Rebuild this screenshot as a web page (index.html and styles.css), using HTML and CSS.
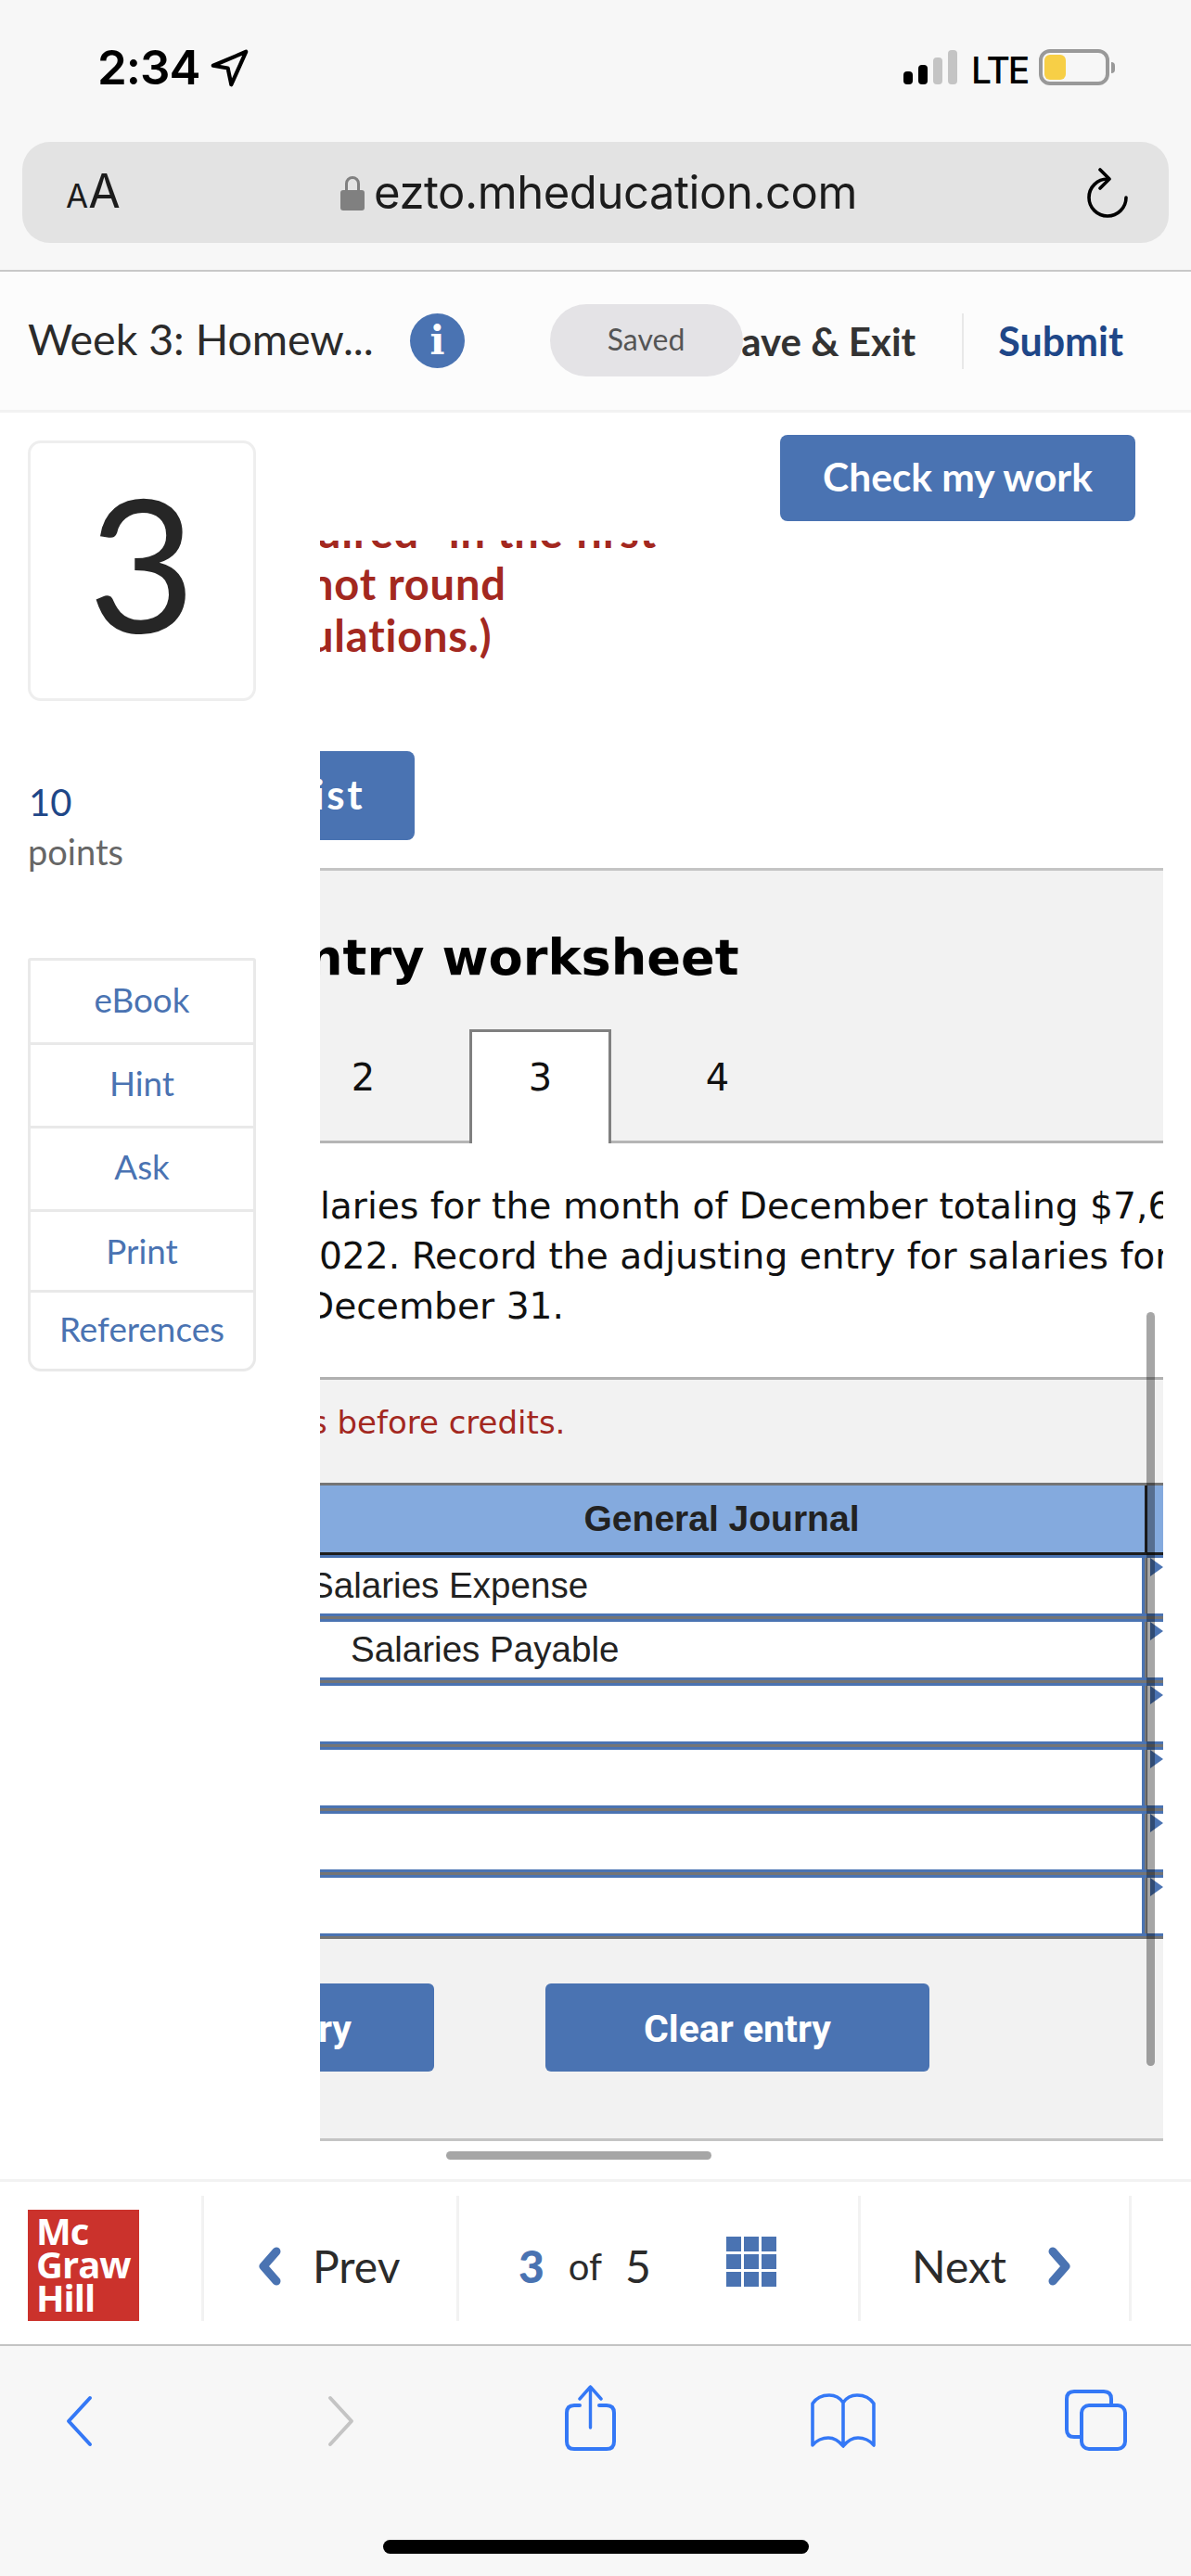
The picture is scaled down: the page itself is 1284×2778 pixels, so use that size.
FILE: index.html
```html
<!DOCTYPE html>
<html lang="en">
<head>
<meta charset="utf-8">
<title>Week 3: Homework</title>
<link rel="stylesheet" href="styles.css">
</head>
<body>
<div class="phone">
  <div class="chrome">
    <div class="status">
      <span class="time">2:34</span>
      <svg class="loc" viewBox="0 0 44 44"><path d="M3 19 L41 3 L24 41 L20 22 Z" fill="none" stroke="#000" stroke-width="4.5" stroke-linejoin="round"/></svg>
      <div class="status-right">
        <div class="signal">
          <i class="bar b1"></i><i class="bar b2"></i><i class="bar b3"></i><i class="bar b4"></i>
        </div>
        <span class="lte">LTE</span>
        <div class="battery"><i class="battery-fill"></i></div>
        <i class="battery-nub"></i>
      </div>
    </div>
    <div class="urlbar">
      <span class="aa"><small>A</small>A</span>
      <div class="url">
        <svg class="lock" viewBox="0 0 26 38"><path d="M6.5 18 V9 A6.5 6.5 0 0 1 19.5 9 V18" fill="none" stroke="#808080" stroke-width="3"/><rect x="0" y="16" width="26" height="22" rx="3" fill="#808080"/></svg>
        <span class="url-text">ezto.mheducation.com</span>
      </div>
      <svg class="reload" viewBox="0 0 44 54"><path d="M22 12 A20 20 0 1 0 42 32" fill="none" stroke="#000" stroke-width="3.6" stroke-linecap="round"/><path d="M14 2 L24 12 L14 22" fill="none" stroke="#000" stroke-width="3.6" stroke-linecap="round" stroke-linejoin="round"/></svg>
    </div>
  </div>

  <header class="topbar">
    <span class="title">Week 3: Homew...</span>
    <span class="info">i</span>
    <div class="actions">
      <span class="save">Save &amp; Exit</span>
      <span class="pill">Saved</span>
      <span class="submit">Submit</span>
    </div>
  </header>

  <main class="main">
    <aside class="side">
      <div class="qnum">3</div>
      <div class="pts">10</div>
      <div class="pts-label">points</div>
      <nav class="menu">
        <a class="m1">eBook</a>
        <a class="m2">Hint</a>
        <a class="m3">Ask</a>
        <a class="m4">Print</a>
        <a class="m5">References</a>
      </nav>
    </aside>

    <section class="content">
      <div class="checkrow"><button class="check">Check my work</button></div>
      <div class="scroller">
        <div class="redtext">
          <div class="r1">uired" in the first</div>
          <div class="r2">not round</div>
          <div class="r3">calculations.)</div>
        </div>
        <button class="viewlist">View transaction list</button>
        <div class="ws-head">
          <h1 class="ws-title">Journal entry worksheet</h1>
          <div class="tabs">
            <span class="tab">1</span>
            <span class="tab">2</span>
            <span class="tab active">3</span>
            <span class="tab">4</span>
          </div>
        </div>
        <div class="desc">
          <div class="d1">Salaries for the month of December totaling $7,600</div>
          <div class="d2">2022. Record the adjusting entry for salaries for</div>
          <div class="d3">December 31.</div>
        </div>
        <div class="entry">
          <p class="note">Enter debits before credits.</p>
          <div class="journal">
            <div class="jhead"><div class="jtitle">General Journal</div><div class="jside"></div></div>
            <div class="jrow"><div class="jcell"><span class="acct debit">Salaries Expense</span></div><div class="jmark"><i class="tri"></i></div></div>
            <div class="jrow"><div class="jcell"><span class="acct credit">Salaries Payable</span></div><div class="jmark"><i class="tri"></i></div></div>
            <div class="jrow"><div class="jcell"></div><div class="jmark"><i class="tri"></i></div></div>
            <div class="jrow"><div class="jcell"></div><div class="jmark"><i class="tri"></i></div></div>
            <div class="jrow"><div class="jcell"></div><div class="jmark"><i class="tri"></i></div></div>
            <div class="jrow"><div class="jcell"></div><div class="jmark"><i class="tri"></i></div></div>
          </div>
          <div class="entry-btns">
            <button class="ebtn">Record entry</button>
            <button class="ebtn">Clear entry</button>
          </div>
        </div>
      </div>
      <i class="vscroll"></i>
      <i class="hscroll"></i>
    </section>
  </main>

  <footer class="pager">
    <div class="logo-cell"><div class="logo"><span>Mc</span><span>Graw</span><span>Hill</span></div></div>
    <div class="pcell prev">
      <svg class="chev" viewBox="0 0 27 42"><path d="M21 5 L7 21 L21 37" fill="none" stroke="#4a73b2" stroke-width="9" stroke-linecap="round" stroke-linejoin="round"/></svg>
      <span>Prev</span>
    </div>
    <div class="pcell pages">
      <b class="cur">3</b><span class="of">of</span><span class="tot">5</span>
      <div class="grid"><i></i><i></i><i></i><i></i><i></i><i></i><i></i><i></i><i></i></div>
    </div>
    <div class="pcell next">
      <span>Next</span>
      <svg class="chev" viewBox="0 0 27 42"><path d="M6 5 L20 21 L6 37" fill="none" stroke="#4a73b2" stroke-width="9" stroke-linecap="round" stroke-linejoin="round"/></svg>
    </div>
    <div class="pend"></div>
  </footer>

  <div class="toolbar">
    <div class="tools">
      <svg class="t-back" viewBox="0 0 30 56"><path d="M26 3 L3 28 L26 53" fill="none" stroke="#3478f6" stroke-width="4" stroke-linecap="round" stroke-linejoin="round"/></svg>
      <svg class="t-fwd" viewBox="0 0 30 56"><path d="M4 3 L27 28 L4 53" fill="none" stroke="#c4c4c4" stroke-width="4" stroke-linecap="round" stroke-linejoin="round"/></svg>
      <svg class="t-share" viewBox="0 0 55 71"><path d="M16 22 H10 Q2 22 2 30 V61 Q2 69 10 69 H45 Q53 69 53 61 V30 Q53 22 45 22 H37" fill="none" stroke="#3478f6" stroke-width="4" stroke-linecap="round"/><path d="M27.5 46 V2 M16 15 L27.5 2 L39 15" fill="none" stroke="#3478f6" stroke-width="3.4" stroke-linecap="round" stroke-linejoin="round"/></svg>
      <svg class="t-book" viewBox="0 0 70 59"><path d="M35 10 C31 4 25 2 20 2 C13 2 6 5 2 11 L2 56 C6 51 13 48 19 48 C26 48 31 52 35 57 C39 52 44 48 51 48 C57 48 64 51 68 56 L68 11 C64 5 57 2 50 2 C45 2 39 4 35 10 Z M35 10 V57" fill="none" stroke="#3478f6" stroke-width="3.6" stroke-linejoin="round"/></svg>
      <svg class="t-tabs" viewBox="0 0 67 66"><path d="M50 15 V10 Q50 2 42 2 H10 Q2 2 2 10 V43 Q2 51 10 51 H16" fill="none" stroke="#3478f6" stroke-width="4"/><rect x="18" y="17" width="47" height="47" rx="8" fill="none" stroke="#3478f6" stroke-width="4"/></svg>
    </div>
    <i class="homebar"></i>
  </div>
</div>
</body>
</html>
```
FILE: styles.css
```css
* { box-sizing: border-box; }
html, body { margin: 0; padding: 0; background: #fff; }
.phone { width: 1284px; height: 2778px; display: flex; flex-direction: column; overflow: hidden; font-family: Lato, sans-serif; color: #2b2b2b; }
button { border: 0; cursor: pointer; }
i { display: block; font-style: normal; }

/* top browser chrome */
.chrome { height: 291px; flex: none; background: #f7f7f7; }
.status { height: 153px; display: flex; align-items: flex-start; padding: 42px 0 0 105px; }
.time { font: 600 51px/62px Inter, sans-serif; color: #000; letter-spacing: -1px; }
.loc { width: 41px; height: 41px; margin: 11px 0 0 12px; }
.status-right { margin-left: auto; display: flex; align-items: flex-start; padding: 12px 82px 0 0; }
.signal { display: flex; align-items: flex-end; gap: 6px; height: 37px; width: 58px; }
.bar { width: 10px; border-radius: 4px; }
.b1 { height: 14px; background: #000; }
.b2 { height: 21px; background: #000; }
.b3 { height: 29px; background: #c4c4c4; }
.b4 { height: 37px; background: #c4c4c4; }
.lte { font: 500 39px/44px Inter, sans-serif; color: #000; margin-left: 15px; width: 73px; letter-spacing: -2px; }
.battery { width: 76px; height: 39px; margin-top: -1px; border: 4px solid #999; border-radius: 12px; padding: 2px; }
.battery-fill { width: 23px; height: 27px; background: #f7cf46; border-radius: 6px; }
.battery-nub { width: 4px; height: 12px; margin: 13px 0 0 2px; background: #999; border-radius: 0 6px 6px 0; }

.urlbar { height: 109px; margin: 0 24px; background: #e3e3e3; border-radius: 30px; display: flex; align-items: center; padding: 0 44px 0 47px; position: relative; }
.aa { font: 400 50px/60px Inter, sans-serif; color: #1c1c1c; width: 57px; padding-top: 2px; }
.aa small { font-size: 35px; }
.url { margin-left: 239px; display: flex; align-items: center; gap: 10px; }
.lock { width: 26px; height: 38px; }
.url-text { font: 400 49px/60px Inter, sans-serif; color: #1c1c1c; letter-spacing: -0.45px; width: 530px; white-space: nowrap; }
.reload { width: 44px; height: 54px; margin-left: auto; }

/* assignment header */
.topbar { height: 154px; flex: none; background: #fcfcfc; border-top: 2px solid #c8c8c8; border-bottom: 3px solid #f2f2f2; display: flex; align-items: center; padding-left: 30px; }
.title { font-size: 46.5px; line-height: 50px; padding-bottom: 6px; color: #2b2b2b; width: 412px; white-space: nowrap; }
.info { width: 59px; height: 59px; border-radius: 50%; background: #4a73b2; color: #fff; font: 700 42px/59px "DejaVu Serif", serif; text-align: center; }
.actions { margin-left: auto; display: flex; align-items: center; position: relative; height: 60px; margin-top: 0; }
.save { font-weight: 700; font-size: 42px; color: #333; padding-right: 50px; border-right: 2px solid #e8e8e8; line-height: 60px; white-space: nowrap; }
.pill { position: absolute; left: -184px; top: -10px; width: 208px; height: 78px; border-radius: 39px; background: #e4e3e6; color: #555; font-size: 32px; line-height: 76px; text-align: center; }
.submit { font-weight: 700; font-size: 43px; color: #1f4788; padding: 0 73px 0 37px; white-space: nowrap; }

/* main */
.main { height: 1905px; flex: none; display: flex; background: #fff; }
.side { width: 345px; flex: none; padding: 30px 0 0 30px; }
.qnum { width: 246px; height: 281px; border: 3px solid #eeeeee; border-radius: 14px; font: 400 200px/254px Lato, sans-serif; color: #262626; text-align: center; background: #fff; }
.pts { font-size: 40px; line-height: 50px; color: #1f4788; margin-top: 84px; padding-left: 1px; }
.pts-label { font-size: 38px; line-height: 50px; color: #666; margin-top: 3px; }
.menu { width: 246px; margin-top: 90px; border: 3px solid #e9e9e9; border-radius: 3px 3px 14px 14px; display: flex; flex-direction: column; }
.menu a { display: flex; align-items: center; justify-content: center; font-size: 36.8px; color: #4a73b2; border-top: 3px solid #e9e9e9; padding-bottom: 5px; }
.menu .m1 { height: 88px; border-top: 0; }
.menu .m2, .menu .m3 { height: 90px; }
.menu .m4 { height: 87px; padding-bottom: 0; }
.menu .m5 { height: 85px; }

.content { width: 909px; flex: none; position: relative; display: flex; flex-direction: column; }
.checkrow { height: 138px; flex: none; display: flex; justify-content: flex-end; align-items: flex-start; padding: 24px 30px 0 0; width: 909px; }
.check { width: 383px; height: 93px; background: #4a73b2; color: #fff; border-radius: 8px; font: 700 42.5px Lato, sans-serif; padding: 0 0 5px; }
.scroller { flex: 1; overflow: hidden; }

.redtext { display: flow-root; height: 227px; color: #a3281f; font-weight: 700; font-size: 47px; letter-spacing: .8px; line-height: 56px; white-space: nowrap; }
.r1 { margin-top: -38px; margin-left: -4px; }
.r2 { margin-left: -12px; }
.r3 { margin-left: -96px; }

.viewlist { display: block; width: 802px; height: 96px; margin-left: -700px; background: #4a73b2; color: #fff; border-radius: 8px; font: 700 44px Lato, sans-serif; letter-spacing: 2.5px; text-align: right; padding: 0 54px 4px 0; white-space: nowrap; }

.ws-head { margin-top: 30px; height: 297px; border-top: 3px solid #c4c4c4; background: #f2f2f2; }
.ws-title { margin: 61px 0 0 -286px; font: 700 54.2px/66px "DejaVu Sans", sans-serif; color: #000; white-space: nowrap; }
.tabs { margin: 44px 0 0 0; height: 123px; display: flex; gap: 38px; border-bottom: 3px solid #b5b5b5; width: 909px; position: relative; }
.tab { width: 153px; flex: none; font: 400 40px/98px "DejaVu Sans", sans-serif; color: #111; text-align: center; height: 123px; padding-top: 3px; }
.tab:first-child { margin-left: -221px; }
.tab.active { background: #fff; border: 3px solid #808080; border-bottom: 0; padding-top: 0; position: relative; }

.desc { height: 252px; background: #fff; padding-top: 41px; font: 400 39.2px/54px "DejaVu Sans", sans-serif; color: #111; white-space: nowrap; }
.d1 { margin-left: -49px; }
.d2 { margin-left: -26px; }
.d3 { margin-left: -15px; }

.entry { height: 824px; border-top: 3px solid #b0b0b0; border-bottom: 3px solid #c4c4c4; background: #f2f2f2; }
.note { margin: 26px 0 0 -199px; font: 400 34px/40px "DejaVu Sans", sans-serif; color: #a3281f; white-space: nowrap; }
.journal { margin: 45px 0 0 -23px; width: 932px; display: flex; flex-direction: column; gap: 3px; background: #757575; padding: 3px 0; }
.jhead { height: 75px; display: flex; border-bottom: 3px solid #1d1d1d; margin-bottom: -3px; background: #84aade; }
.jtitle { width: 915px; flex: none; border-right: 3px solid #1d1d1d; font: 700 39px/72px "Liberation Sans", sans-serif; color: #222; text-align: center; }
.jside { flex: 1; }
.jrow { height: 66px; display: flex; border-top: 3px solid #4a73b2; border-bottom: 3px solid #4a73b2; }
.jcell { width: 912px; flex: none; background: #fff; border-right: 3px solid #4a73b2; display: flex; align-items: center; }
.jmark { margin-left: 3px; flex: 1; background: #fff; position: relative; }
.tri { width: 14px; height: 20px; margin-left: 3px; background: #4a73b2; clip-path: polygon(0 0, 100% 50%, 0 100%); }
.acct { font: 400 38.6px/58px "Liberation Sans", sans-serif; color: #222; white-space: nowrap; }
.acct.debit { margin-left: 12px; }
.acct.credit { margin-left: 56px; }

.entry-btns { display: flex; gap: 120px; margin: 48px 0 0 -291px; }
.ebtn { width: 414px; height: 95px; flex: none; background: #4a73b2; color: #fff; border-radius: 6px; font: 700 41px Roboto, sans-serif; padding: 3px 0 0; }

.vscroll { position: absolute; left: 891px; top: 970px; width: 9px; height: 813px; background: rgba(0,0,0,.35); border-radius: 5px; }
.hscroll { position: absolute; left: 136px; top: 1875px; width: 286px; height: 9px; background: rgba(0,0,0,.35); border-radius: 5px; }

/* pager */
.pager { height: 178px; flex: none; background: #fff; border-top: 3px solid #f2f2f2; display: flex; padding-top: 15px; }
.logo-cell { width: 217px; flex: none; padding: 15px 0 0 30px; }
.logo { width: 120px; height: 120px; background: #cb322c; color: #fff; font: 700 40px/36px "Open Sans", sans-serif; letter-spacing: -1px; display: flex; flex-direction: column; padding: 5px 0 0 9px; }
.pcell { height: 135px; flex: none; border-left: 3px solid #f2f2f2; display: flex; align-items: center; font-size: 48px; color: #2b2b2b; padding-top: 16px; }
.prev { width: 275px; padding-left: 57px; gap: 33px; }
.pages { width: 433px; padding-left: 64px; }
.next { width: 292px; padding-left: 55px; gap: 44px; }
.pend { width: 3px; height: 135px; background: #f2f2f2; }
.chev { width: 27px; height: 42px; flex: none; }
.cur { font-size: 48px; color: #4a73b2; font-weight: 900; }
.of { font-size: 40px; margin-left: 26px; }
.tot { font-size: 48px; margin-left: 25px; }
.grid { width: 54px; height: 53px; margin-left: 81px; display: grid; grid-template-columns: repeat(3, 16px); grid-template-rows: repeat(3, 16px); gap: 3px; margin-top: -10px; }
.grid i { background: #4a73b2; }

/* bottom toolbar */
.toolbar { flex: 1; background: #f7f7f7; border-top: 2px solid #c4c4c4; display: flex; flex-direction: column; align-items: center; }
.tools { width: 1284px; height: 209px; position: relative; }
.tools svg { position: absolute; }
.t-back { left: 71px; top: 53px; width: 30px; height: 56px; }
.t-fwd { left: 352px; top: 53px; width: 30px; height: 56px; }
.t-share { left: 609px; top: 42px; width: 55px; height: 71px; }
.t-book { left: 874px; top: 51px; width: 70px; height: 59px; }
.t-tabs { left: 1148px; top: 47px; width: 67px; height: 66px; }
.homebar { width: 459px; height: 15px; background: #000; border-radius: 8px; }
```
